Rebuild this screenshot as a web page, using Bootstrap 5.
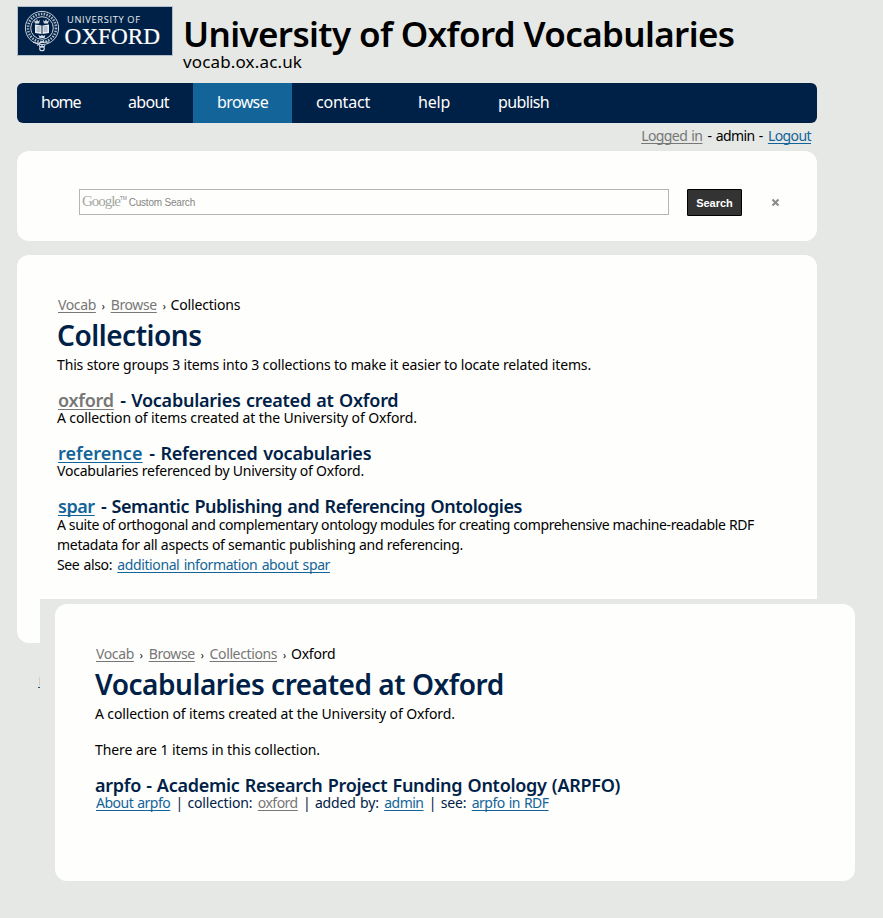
<!DOCTYPE html>
<html lang="en">
<head>
<meta charset="utf-8">
<meta name="viewport" content="width=device-width, initial-scale=1">
<title>University of Oxford Vocabularies</title>
<link href="https://cdn.jsdelivr.net/npm/bootstrap@5.3.0/dist/css/bootstrap.min.css" rel="stylesheet">
<style>
body{background:#e6e8e5;color:#000;font-family:"Noto Sans","Open Sans",sans-serif;font-size:14px;line-height:20px;height:918px}
.page{width:800px;margin-left:17px;padding-top:6px}
.masthead{height:77px}
.logo{width:156px;height:50px}
.site-title{font-size:35px;line-height:40px;font-weight:600;letter-spacing:-.63px;margin:8px 0 0 10px}
.site-url{font-size:17px;line-height:20px;letter-spacing:.15px;margin:-2px 0 0 10px}
.main-nav{background:#002147;border-radius:6px;height:40px;padding:0}
.main-nav .navbar-nav .nav-link{color:#fff;font-size:16px;line-height:38px;padding:0 0 0 24px;height:40px}
.main-nav .navbar-nav .nav-link.active{background:#136498;color:#fff}
.n-home{width:87px;letter-spacing:-1px}.n-about{width:89px;letter-spacing:-.63px}.n-browse{width:99px;letter-spacing:-.62px}
.n-contact{width:102px;letter-spacing:-.21px}.n-help{width:80px;letter-spacing:-.2px}.n-publish{width:99px;letter-spacing:-.62px}
a{color:#136498;padding:0 1px;text-underline-offset:2px;text-decoration-thickness:1px;text-decoration-skip-ink:none}
a.seen{color:#777}
.login{height:28px;padding:3px 5px 0 0;letter-spacing:-.58px;word-spacing:1.1px}
.panel{background:#fefefc;border:0;border-radius:12px;width:800px}
.search-panel{height:90px;padding:38px 37px 0 62px}
.search-box{width:590px;height:26px;border:1px solid #b5b5b3;padding-left:2px;color:#858585;font:10px/25px "Liberation Sans",Arial,sans-serif;letter-spacing:-.2px}
.g-mark{font:15px/23px "Liberation Serif",serif;letter-spacing:-1.05px;color:#a3a8a3}
.g-tm{font-size:5px;line-height:16px;margin:0 2px 0 0;letter-spacing:-.2px}
.go{width:55px;height:27px;margin-left:18px;padding:1px 0 0;border:1px solid #000;border-radius:1px;background:#333;color:#fff;font:bold 11px/25px "Liberation Sans",Arial,sans-serif}
.go:hover{background:#333;color:#fff}
.panel-text{padding:40px 40px 0}
.list-page{height:388px;margin-top:14px}
h2{font-size:28px;line-height:36px;font-weight:600;color:#002147;margin:2px 0;letter-spacing:-.46px}
h3{font-size:18px;line-height:20px;font-weight:600;color:#002147;margin:15px 0 -2px}
p{margin:0;white-space:nowrap}
h1,h2,h3{white-space:nowrap}
.crumbs{height:20px;letter-spacing:-.18px}
.crumbs a{letter-spacing:-.38px}
.sep{display:inline-block;width:12.8px;text-align:center;font-size:10px;line-height:10px}
.t08{letter-spacing:-.082px}.t12{letter-spacing:-.12px}.t15{letter-spacing:-.151px}
.t22{letter-spacing:-.219px}.t26{letter-spacing:-.264px}.t36{letter-spacing:-.363px}
.h-oxford{letter-spacing:-.25px;word-spacing:1px}
.h-reference{letter-spacing:-.26px;word-spacing:1.3px}
.h-reference a{letter-spacing:.03px}
.h-spar{letter-spacing:-.46px;word-spacing:1.1px}
.h-arpfo{letter-spacing:-.28px;word-spacing:.8px}
.abstract{margin-top:1px}
.also{letter-spacing:-.4px;word-spacing:1.1px}
.front-window{left:40px;top:599px;right:0;bottom:0;background:#e6e8e5;padding:5px 0 0 15px}
.front-window .panel{height:277px}
.meta{color:#002147;letter-spacing:-.14px;word-spacing:.8px}
.meta a{letter-spacing:-.5px}
.scrap{left:38px;top:677px}
</style>
<script src="https://cdn.jsdelivr.net/npm/bootstrap@5.3.0/dist/js/bootstrap.bundle.min.js"></script>
</head>
<body class="position-relative overflow-hidden">
<div class="page">
  <header class="masthead d-flex">
    <svg class="logo flex-shrink-0" viewBox="0 0 156 50" role="img" aria-label="University of Oxford">
      <rect x=".5" y=".5" width="155" height="49" fill="#002147" stroke="#b3c0cc"/>
      <g fill="none" stroke="#dce3ea">
        <circle cx="25" cy="22" r="16.6" stroke-width=".9"/>
        <circle cx="25" cy="22" r="14" stroke="#a9b7c6" stroke-width="2.6" stroke-dasharray="1.5 1.3"/>
        <circle cx="25" cy="22" r="11.3" stroke-width=".9"/>
        <path d="M16 36l5 1.500 6-3M20 39.500l4-3 8-.5M22 39l1 2h4l1-2M25 38.500v3" stroke-width="1"/>
        <circle cx="25" cy="42.500" r="2.300" stroke-width="1.100"/>
      </g>
      <path d="M18 18.500l6.500 1v8.500l-6.500-1zM32 18.500l-6.500 1v8.500l6.500-1z" fill="#e8edf2"/>
      <path d="M19.500 21h4M19.500 23h4M19.500 25h4M26.500 21h4M26.500 23h4M26.500 25h4" stroke="#5f7690" stroke-width=".7"/>
      <path d="M18 17.500l-1-3.500 2 1.500 1-2.500 1 2.500 2-1.500-1 3.500zM27 17.500l-1-3.500 2 1.500 1-2.500 1 2.500 2-1.500-1 3.500zM22.500 32l-1-3 2 1 1.500-1 1.500 1 2-1-1 3z" fill="#d5dde5"/>
      <text x="50" y="17" fill="#e9eef2" font-family="Open Sans,sans-serif" font-size="9.300" textLength="73">UNIVERSITY OF</text>
      <text x="47.500" y="37.600" fill="#fff" stroke="#fff" stroke-width=".2" font-family="Liberation Serif,serif" font-size="23.500" textLength="95.500" lengthAdjust="spacingAndGlyphs">OXFORD</text>
    </svg>
    <div>
      <h1 class="site-title">University of Oxford Vocabularies</h1>
      <p class="site-url">vocab.ox.ac.uk</p>
    </div>
  </header>

  <nav class="main-nav navbar navbar-expand overflow-hidden">
    <div class="navbar-nav">
      <a class="nav-link n-home" href="#">home</a>
      <a class="nav-link n-about" href="#">about</a>
      <a class="nav-link active n-browse" href="#">browse</a>
      <a class="nav-link n-contact" href="#">contact</a>
      <a class="nav-link n-help" href="#">help</a>
      <a class="nav-link n-publish" href="#">publish</a>
    </div>
  </nav>

  <div class="login text-end"><a class="seen" href="#">Logged in</a> - admin - <a href="#">Logout</a></div>

  <form class="panel search-panel d-flex align-items-start">
    <div class="search-box d-flex"><span class="g-mark">Google</span><span class="g-tm">TM</span><span>Custom Search</span></div>
    <button type="button" class="btn go">Search</button>
    <svg class="ms-auto mt-2" width="9" height="11" viewBox="0 0 9 11"><path d="M1.500 2.500l6 6M7.500 2.500l-6 6" stroke="#8a8a8a" stroke-width="2"/></svg>
  </form>

  <main class="panel panel-text list-page">
    <p class="crumbs"><a class="seen" href="#">Vocab</a><span class="sep">›</span><a class="seen" href="#">Browse</a><span class="sep">›</span>Collections</p>
    <h2>Collections</h2>
    <p class="t15">This store groups 3 items into 3 collections to make it easier to locate related items.</p>
    <h3 class="h-oxford"><a class="seen" href="#">oxford</a> - Vocabularies created at Oxford</h3>
    <p class="t12">A collection of items created at the University of Oxford.</p>
    <h3 class="h-reference"><a href="#">reference</a> - Referenced vocabularies</h3>
    <p class="t22">Vocabularies referenced by University of Oxford.</p>
    <h3 class="h-spar"><a href="#">spar</a> - Semantic Publishing and Referencing Ontologies</h3>
    <div class="abstract">
      <p class="t36">A suite of orthogonal and complementary ontology modules for creating comprehensive machine-readable RDF</p>
      <p class="t26">metadata for all aspects of semantic publishing and referencing.</p>
      <p class="also">See also: <a href="#">additional information about spar</a></p>
    </div>
  </main>
</div>

<svg class="scrap position-absolute" width="2" height="11"><path d="M1.500 0v9" stroke="#dccac4"/><path d="M0 10.500h2" stroke="#24476b"/></svg>

<section class="front-window position-absolute">
  <div class="panel panel-text">
    <p class="crumbs"><a class="seen" href="#">Vocab</a><span class="sep">›</span><a class="seen" href="#">Browse</a><span class="sep">›</span><a class="seen" href="#">Collections</a><span class="sep">›</span>Oxford</p>
    <h2>Vocabularies created at Oxford</h2>
    <p class="t12">A collection of items created at the University of Oxford.</p>
    <p class="t08 mt-3">There are 1 items in this collection.</p>
    <h3 class="h-arpfo">arpfo - Academic Research Project Funding Ontology (ARPFO)</h3>
    <p class="meta"><a href="#">About arpfo</a> | collection: <a class="seen" href="#">oxford</a> | added by: <a href="#">admin</a> | see: <a href="#">arpfo in RDF</a></p>
  </div>
</section>
</body>
</html>
